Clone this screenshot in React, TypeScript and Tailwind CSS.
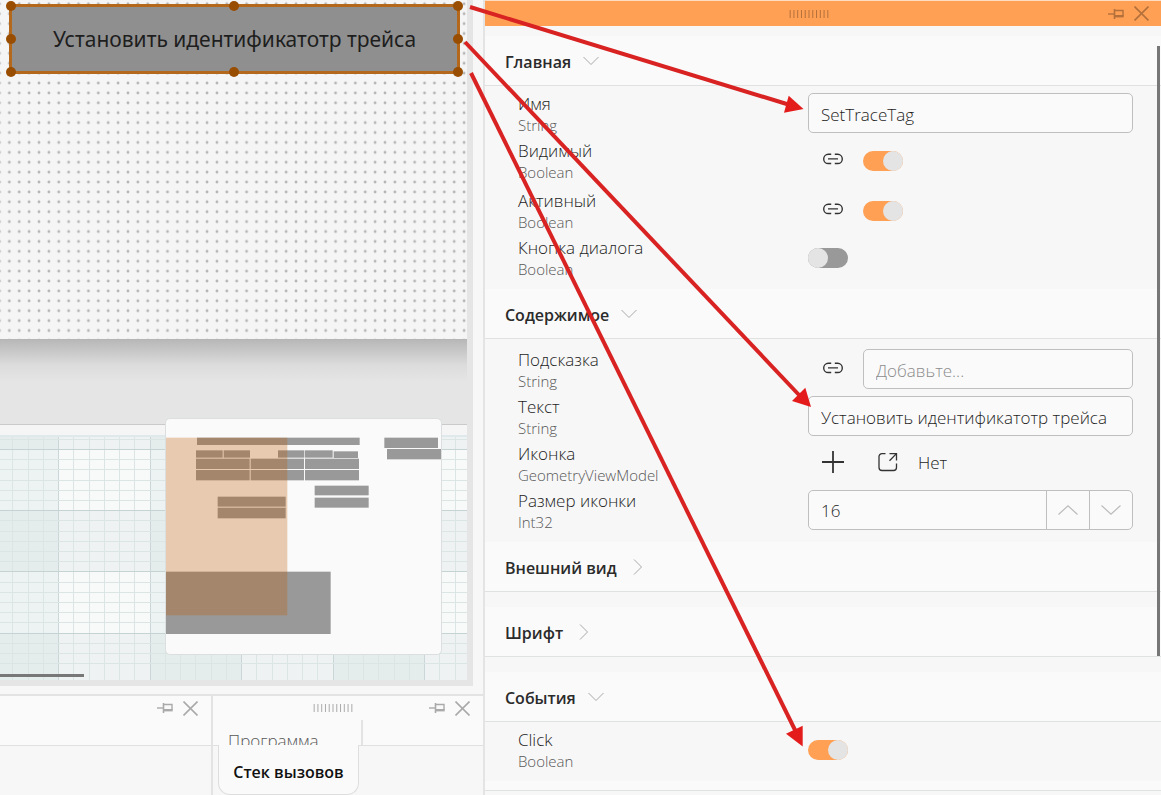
import { useState } from "react";
import type { ReactNode } from "react";

const FONT = "font-['Open_Sans','Noto_Sans',sans-serif]";

const handles = [
  "-left-1.5 -top-1.5",
  "left-1/2 -ml-[5px] -top-1.5",
  "-right-1.5 -top-1.5",
  "-left-1.5 top-1/2 -mt-[5px]",
  "-right-1.5 top-1/2 -mt-[5px]",
  "-left-1.5 -bottom-1.5",
  "left-1/2 -ml-[5px] -bottom-1.5",
  "-right-1.5 -bottom-1.5",
];

// x, y, width, height of every control on the minimap
const blocks = [
  [141, 84, 488, 22],
  [703, 84, 161, 31],
  [711, 118, 162, 31],
  [138, 122, 80, 22],
  [221, 122, 79, 22],
  [384, 122, 79, 22],
  [465, 122, 83, 22],
  [551, 125, 73, 20],
  [138, 147, 161, 31],
  [302, 147, 160, 31],
  [465, 147, 162, 31],
  [138, 181, 161, 31],
  [302, 181, 160, 31],
  [465, 181, 162, 31],
  [494, 228, 162, 29],
  [494, 264, 162, 30],
  [203, 261, 204, 30],
  [203, 294, 204, 32],
  [48, 486, 494, 187],
];

function Grip() {
  return (
    <svg width="40" height="8" viewBox="0 0 116 24" stroke="currentColor" strokeWidth="3">
      {Array.from({ length: 11 }, (_, i) => (
        <path key={i} d={`M${1.5 + i * 11.3} 0V24`} />
      ))}
    </svg>
  );
}

function PinIcon() {
  return (
    <svg width="16" height="12" viewBox="0 0 16 12" fill="none" stroke="currentColor">
      <path d="M0 6H6" strokeWidth="1.4" />
      <path d="M6.5 1V11" strokeWidth="1.6" />
      <path d="M6.5 2.5H15V8" strokeWidth="1.4" />
      <path d="M6.5 8.2H15.7" strokeWidth="2.4" />
    </svg>
  );
}

function CloseIcon() {
  return (
    <svg width="15" height="15" viewBox="0 0 15 15" fill="none" stroke="currentColor" strokeWidth="1.6">
      <path d="M.5 .5L14.5 14.5M14.5 .5L.5 14.5" />
    </svg>
  );
}

function LinkIcon() {
  return (
    <svg width="20" height="12" viewBox="0 0 20 12" fill="none" stroke="currentColor" strokeWidth="1.4">
      <path d="M8.2 1.3H5.3A4.6 4.6 0 0 0 5.3 10.5H8.2M11.8 1.3H14.7A4.6 4.6 0 0 1 14.7 10.5H11.8M5 5.9H15" />
    </svg>
  );
}

function OpenIcon() {
  return (
    <svg width="20" height="20" viewBox="0 0 20 20" fill="none" stroke="currentColor" strokeWidth="1.3">
      <path d="M7.5 1.6H4A3 3 0 0 0 1 4.6V15.5A3 3 0 0 0 4 18.5H15.5A3 3 0 0 0 18.5 15.5V11.5" />
      <path d="M11.5 1.6H18.5V8.5M18.2 1.9L11.5 8.8" />
    </svg>
  );
}

function WindowButtons() {
  return (
    <div className="flex w-14 shrink-0 items-center justify-end gap-2.5 pr-3">
      <button type="button" aria-label="Закрепить">
        <PinIcon />
      </button>
      <button type="button" aria-label="Закрыть">
        <CloseIcon />
      </button>
    </div>
  );
}

function Toggle({ id, on = false }: { id: string; on?: boolean }) {
  const [checked, setChecked] = useState(on);
  return (
    <input
      id={id}
      type="checkbox"
      checked={checked}
      onChange={(e) => setChecked(e.target.checked)}
      className="mt-[11px] h-5 w-10 appearance-none rounded-full bg-[#999] before:block before:size-5 before:rounded-full before:bg-[#e4e4e4] checked:bg-[#ffa055] checked:before:ml-5"
    />
  );
}

function IconButton({ id, label, children }: { id?: string; label: string; children: ReactNode }) {
  return (
    <button
      id={id}
      type="button"
      aria-label={label}
      className="mr-[5px] flex h-[38px] w-[50px] shrink-0 items-center justify-center text-[#333]"
    >
      {children}
    </button>
  );
}

function Row({ id, name, type, tall, children }: { id: string; name: string; type: string; tall?: boolean; children: ReactNode }) {
  return (
    <div className={`flex pl-[33px] pr-7 ${tall ? "h-[50px]" : "h-[47px]"}`}>
      <label htmlFor={id} className="min-w-0 flex-1">
        <span className="block text-[17px] leading-[22px] text-[#1e1e1e]">{name}</span>
        <span className="block text-[15px] leading-5 text-[#585858]">{type}</span>
      </label>
      <div className="flex w-[325px] shrink-0 items-start">{children}</div>
    </div>
  );
}

function SectionHeader({ title, open }: { title: string; open?: boolean }) {
  return (
    <button
      type="button"
      aria-expanded={!!open}
      className="flex h-[50px] w-full items-center gap-3 border-b border-[#e0e2e2] bg-[#fafafa] pl-5 text-left"
    >
      <span className="pt-0.5 text-base font-semibold leading-[22px] text-[#2b2b2b]">{title}</span>
      <svg width="16" height="16" viewBox="0 0 16 16" fill="none" stroke="#a8a8a8">
        <path d={open ? "M.5 4L8 11.5L15.5 4" : "M5 .5L12.5 8L5 15.5"} />
      </svg>
    </button>
  );
}

const field = "h-10 min-w-0 flex-1 rounded-[5px] border border-[#bfbfbf] bg-[#fafafa] px-3 pt-0.5 text-[17px] text-[#1e1e1e] placeholder:text-[#8c8c8c]";

function Properties() {
  return (
    <aside className="relative min-w-0 flex-1 overflow-hidden border-l-2 border-[#e4e4e4] bg-[#f7f7f7]">
      <header className="mb-2.5 flex h-[26px] items-center border-t border-[#ffdcc0] bg-[#ffa055] text-[#b3703b]">
        <div className="w-7" />
        <div className="flex flex-1 justify-center">
          <Grip />
        </div>
        <WindowButtons />
      </header>

      <SectionHeader title="Главная" open />
      <div className="pb-[5px] pt-[7px]">
        <Row id="name" name="Имя" type="String">
          <input id="name" className={field} defaultValue="SetTraceTag" />
        </Row>
        <Row id="visible" name="Видимый" type="Boolean" tall>
          <IconButton label="Привязка"><LinkIcon /></IconButton>
          <Toggle id="visible" on />
        </Row>
        <Row id="active" name="Активный" type="Boolean">
          <IconButton label="Привязка"><LinkIcon /></IconButton>
          <Toggle id="active" on />
        </Row>
        <Row id="dialog" name="Кнопка диалога" type="Boolean">
          <Toggle id="dialog" />
        </Row>
      </div>

      <SectionHeader title="Содержимое" open />
      <div className="pb-[5px] pt-2.5">
        <Row id="hint" name="Подсказка" type="String">
          <IconButton label="Привязка"><LinkIcon /></IconButton>
          <input id="hint" className={field} placeholder="Добавьте..." />
        </Row>
        <Row id="text" name="Текст" type="String">
          <input id="text" className={field} defaultValue="Установить идентификатотр трейса" />
        </Row>
        <Row id="icon" name="Иконка" type="GeometryViewModel">
          <IconButton id="icon" label="Добавить">
            <svg width="22" height="22" viewBox="0 0 22 22" stroke="currentColor" strokeWidth="1.8">
              <path d="M0 11H22M11 0V22" />
            </svg>
          </IconButton>
          <IconButton label="Открыть"><OpenIcon /></IconButton>
          <span className="text-[17px] leading-10 text-[#1e1e1e]">Нет</span>
        </Row>
        <Row id="size" name="Размер иконки" type="Int32">
          <div className="flex h-10 flex-1 overflow-hidden rounded-[5px] border border-[#bfbfbf] bg-[#fafafa]">
            <input id="size" className="min-w-0 flex-1 px-3 pt-0.5 text-[17px] text-[#1e1e1e]" defaultValue="16" />
            <button type="button" aria-label="Больше" className="flex w-[43px] items-center justify-center border-l border-[#bfbfbf]">
              <svg width="20" height="10" viewBox="0 0 20 10" fill="none" stroke="#bbb" strokeWidth="1.2"><path d="M.5 9.5L10 .8L19.5 9.5" /></svg>
            </button>
            <button type="button" aria-label="Меньше" className="flex w-[43px] items-center justify-center border-l border-[#bfbfbf]">
              <svg width="20" height="10" viewBox="0 0 20 10" fill="none" stroke="#bbb" strokeWidth="1.2"><path d="M.5 .5L10 9.2L19.5 .5" /></svg>
            </button>
          </div>
        </Row>
      </div>

      <div className="flex flex-col gap-[15px]">
        <SectionHeader title="Внешний вид" />
        <SectionHeader title="Шрифт" />
        <SectionHeader title="События" open />
      </div>
      <div className="pb-[5px] pt-[7px]">
        <Row id="click" name="Click" type="Boolean">
          <Toggle id="click" on />
        </Row>
      </div>
      <div className="h-2.5 border-b border-[#e0e2e2] bg-[#fafafa]" />

      <div className="absolute right-px top-[46px] h-[610px] w-[3px] bg-[#777]" />
    </aside>
  );
}

function FormCanvas() {
  return (
    <div className="relative h-[339px] overflow-hidden bg-[#f5f5f5]">
      <svg className="absolute inset-0 h-full w-full">
        <defs>
          <pattern id="dots" x="-5.5" y="-1.1" width="9.886" height="9.9" patternUnits="userSpaceOnUse">
            <circle cx="4.95" cy="4.95" r="1.4" fill="#b4b4b4" />
          </pattern>
        </defs>
        <rect width="100%" height="100%" fill="url(#dots)" />
      </svg>
      <button
        type="button"
        className="absolute left-[9px] right-[7px] top-1 h-[70px] border-[3px] border-[#b4681c] bg-[#8f8f8f] pt-0.5 font-['Noto_Sans',sans-serif] text-[21px] font-normal text-[#1e1e1e]"
      >
        Установить идентификатотр трейса
        {handles.map((h) => (
          <span key={h} className={`absolute size-2.5 rounded-full bg-[#994d00] ${h}`} />
        ))}
      </button>
    </div>
  );
}

// every sixth line is a major one; the tint alternates between major cells
function Blueprint() {
  const cols = Array.from({ length: 40 }, (_, i) => ({ at: Math.round(58 + (i - 6) * 15.25), major: i % 6 === 0 }));
  const rows = Array.from({ length: 28 }, (_, i) => ({ at: Math.round(14 + (i - 6) * 10.2), major: i % 6 === 0 }));
  return (
    <svg className="h-[245px] w-full" shapeRendering="crispEdges">
      <rect width="100%" height="100%" fill="#f8faf9" />
      {[-33, 150, 333].map((x) => (
        <rect key={x} x={x} width="92" height="100%" fill="#b9cdd2" opacity=".17" />
      ))}
      {[-47, 75, 198].map((y) => (
        <rect key={y} y={y} width="100%" height="61" fill="#b9cccc" opacity=".16" />
      ))}
      {cols.map((c) => (
        <rect key={c.at} x={c.at} width="1" height="100%" fill={c.major ? "#cad6d7" : "#dae5e4"} />
      ))}
      {rows.map((r) => (
        <rect key={r.at} y={r.at} width="100%" height="1" fill={r.major ? "#c6d3d3" : "#dae5e4"} />
      ))}
      <rect width="100%" height="2" fill="#dfe8ea" />
    </svg>
  );
}

function Minimap() {
  return (
    <div className="absolute right-[25px] top-[79px] h-[237px] w-[277px] overflow-hidden rounded-[5px] border border-[#dcdfdf] bg-[#fafafa]">
      <svg width="275" height="235" viewBox="48 28 825 705">
        {blocks.map(([x, y, w, h]) => (
          <rect key={`${x}-${y}`} x={x} y={y} width={w} height={h} fill="#999" />
        ))}
        <rect x="48" y="84" width="364" height="533" fill="#be5d03" opacity=".3" />
      </svg>
    </div>
  );
}

function BottomPanels() {
  return (
    <div className="flex min-h-[101px] flex-1 border-t-2 border-[#e3e3e3] bg-[#f7f7f7] text-[#aaa]">
      <section className="w-[211px] shrink-0">
        <header className="flex h-[50px] items-start justify-end border-b border-[#e0e0e0] bg-[#fafafa]">
          <div className="mr-px flex h-6 items-center">
            <WindowButtons />
          </div>
        </header>
      </section>
      <section className="min-w-0 flex-1 border-l-2 border-[#e3e3e3]">
        <header className="h-[50px] border-b border-[#e0e0e0] bg-[#fafafa]">
          <div className="mr-px flex h-6 items-center">
            <div className="w-7" />
            <div className="flex flex-1 justify-center">
              <Grip />
            </div>
            <WindowButtons />
          </div>
          <button
            type="button"
            className="block h-[25px] w-[150px] overflow-hidden border-r-2 border-[#e3e3e3] pl-[15px] pt-2.5 text-left text-[17px] leading-[22px] text-[#585858]"
          >
            Программа
          </button>
        </header>
        <button
          type="button"
          className="relative -top-px ml-[5px] block h-[50px] w-[141px] rounded-b-xl border border-t-0 border-[#dedede] bg-[#fafafa] pt-1 text-base font-semibold text-[#111]"
        >
          Стек вызовов
        </button>
      </section>
    </div>
  );
}

function Arrows() {
  return (
    <svg className="pointer-events-none absolute left-0 top-0" width="1161" height="795" fill="#e41b1b" stroke="none">
      <g stroke="#d92222" strokeWidth="4">
        <path d="M470 7L790 105" />
        <path d="M465 42L800 396" />
        <path d="M471 73L796 732" />
      </g>
      <path d="M803.5 109L788.7 95.7L784 112.7Z" />
      <path d="M811 407L805.3 387.7L792 401Z" />
      <path d="M802.7 746.5L802.7 725.7L786 733.7Z" />
    </svg>
  );
}

export default function App() {
  return (
    <main className={`relative flex h-screen min-h-[795px] overflow-hidden bg-[#f7f7f7] font-light ${FONT}`}>
      <div className="flex w-[41.6%] flex-col">
        <div className="mb-2 mr-2.5 border-b-[6px] border-r-[6px] border-[#e5e5e5]">
          <FormCanvas />
          <div className="relative bg-[#e5e5e5]">
            <div className="h-[85px] border-t border-[#b5b5b5] bg-linear-to-b from-[#b8b8b8] via-[#dcdcdc] via-30% to-[#e5e5e5] to-50%" />
            <div className="h-[11px] border-t border-[#cacaca] bg-[#f5f5f5]" />
            <Blueprint />
            <Minimap />
            <div className="absolute bottom-[3px] left-0 h-[3px] w-[84px] bg-[#777]" />
          </div>
        </div>
        <BottomPanels />
      </div>
      <Properties />
      <Arrows />
    </main>
  );
}
